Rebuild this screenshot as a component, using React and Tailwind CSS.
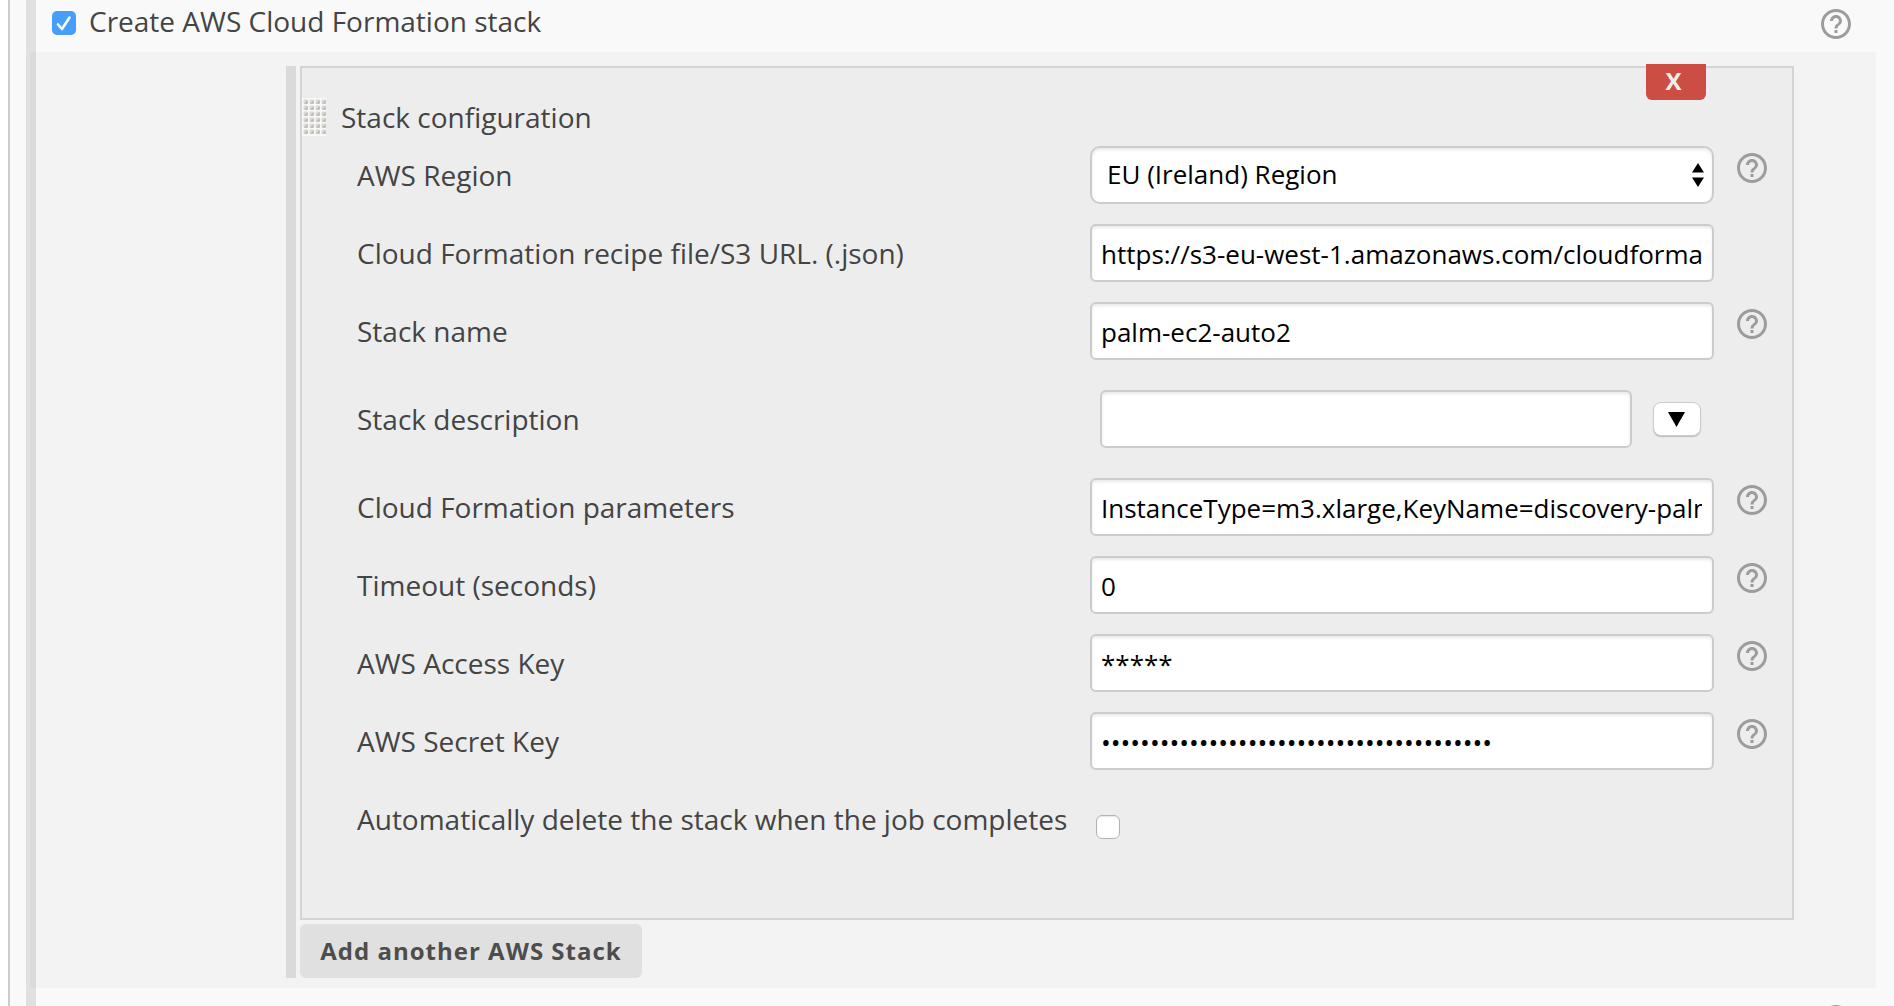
const dots = '•'.repeat(40);

function HelpIcon({ className = '' }) {
  return (
    <svg viewBox="2 2 20 20" className={`block size-[30px] shrink-0 fill-[#9c9c9c] ${className}`}>
      <path d="M11 18h2v-2h-2v2zm1-16C6.48 2 2 6.48 2 12s4.480 10 10 10 10-4.480 10-10S17.520 2 12 2zm0 18c-4.410 0-8-3.590-8-8s3.590-8 8-8 8 3.590 8 8-3.590 8-8 8zm0-14c-2.210 0-4 1.790-4 4h2c0-1.100.900-2 2-2s2 .900 2 2c0 2-3 1.750-3 5h2c0-2.250 3-2.500 3-5 0-2.210-1.790-4-4-4z" />
    </svg>
  );
}

const fieldBox =
  'h-[58px] border-2 border-[#ccc] bg-white text-black shadow-[inset_0_2px_3px_rgba(0,0,0,0.09)]';

function TextField({ value }) {
  return (
    <div className={`${fieldBox} w-[624px] rounded-md pl-[9px] pr-[10px]`}>
      <div className="overflow-hidden whitespace-nowrap text-[26px] leading-[56px]">{value}</div>
    </div>
  );
}

function Row({ label, help = true, tall = false, children }) {
  return (
    <div className={`flex items-start ${tall ? 'h-[98px] pt-[10px]' : 'h-[78px]'}`}>
      <div className="w-[733px] shrink-0 whitespace-nowrap text-[28px] leading-[58px]">{label}</div>
      <div className="w-[647px] shrink-0">{children}</div>
      {help && <HelpIcon className="mt-[7px]" />}
    </div>
  );
}

function Grip() {
  const cells = Array.from({ length: 24 });
  return (
    <svg viewBox="0 0 24 38" className="h-[38px] w-[24px] shrink-0">
      <rect width="24" height="38" fill="#f8f8f7" />
      {cells.map((_, i) => {
        const x = 1.5 + (i % 4) * 6;
        const y = 1.5 + Math.floor(i / 4) * 6;
        return (
          <g key={i}>
            <rect x={x} y={y} width="4.5" height="4.5" rx="1.2" fill="#dad9d6" />
            <path d={`M${x + 4.2} ${y + 0.6}V${y + 4.2}H${x + 0.6}Z`} fill="#bbb9b5" />
          </g>
        );
      })}
    </svg>
  );
}

export default function App() {
  return (
    <div className="flex h-[1006px] w-[1894px] overflow-hidden bg-white pl-2 font-['Open_Sans','Noto_Sans',sans-serif] text-[#444]">
      <div className="flex w-full border-l-2 border-[#ccc] bg-[#f9f9f9] pl-4">
        <div className="w-[10px] shrink-0 bg-[#e0e0e0]">
          <div className="ml-1 mt-[52px] h-[936px] bg-[#dadada]" />
        </div>
        <div className="w-[1840px] shrink-0">
          <div className="flex h-[52px] items-start">
            <div className="ml-4 mt-[11px] flex size-6 items-center justify-center rounded-[5px] bg-[#479ef8]">
              <svg viewBox="0 0 24 24" className="size-6 fill-none stroke-white stroke-[2.6]" strokeLinecap="round" strokeLinejoin="round">
                <path d="M6 13.500l4 4.500L17.500 6.500" />
              </svg>
            </div>
            <div className="ml-[13px] w-[1732px] whitespace-nowrap text-[28px] leading-[42px]">Create AWS Cloud Formation stack</div>
            <HelpIcon className="mt-[9px]" />
          </div>
          <div className="flex h-[936px] bg-[#f3f3f3] pl-[250px] pt-[14px]">
            <div className="h-[912px] w-[10px] shrink-0 bg-[#dadada]" />
            <div className="ml-1">
              <div className="relative h-[854px] w-[1494px] border-2 border-[#d4d4d4] bg-[#ededed]">
                <button className="absolute -top-1 right-[86px] h-9 w-[60px] rounded-b-md bg-[#cc4d43] pr-[5px] text-[24px] font-bold leading-[34px] text-[#eee]">
                  <span className="block h-9">X</span>
                </button>
                <div className="flex h-[78px] pt-[30px]">
                  <Grip />
                  <div className="ml-[15px] text-[28px] leading-[38px]">Stack configuration</div>
                </div>
                <div className="pl-[55px]">
                  <Row label="AWS Region">
                    <div className={`${fieldBox} flex w-[624px] items-center justify-between rounded-[10px] pl-[15px] pr-2`}>
                      <span className="h-[54px] text-[26px] leading-[52px]">EU (Ireland) Region</span>
                      <svg viewBox="0 0 12 24" className="h-6 w-3">
                        <path d="M6 0l6 9.500H0zM6 24l6-9.500H0z" />
                      </svg>
                    </div>
                  </Row>
                  <Row label="Cloud Formation recipe file/S3 URL. (.json)" help={false}>
                    <TextField value="https://s3-eu-west-1.amazonaws.com/cloudformation" />
                  </Row>
                  <Row label="Stack name">
                    <TextField value="palm-ec2-auto2" />
                  </Row>
                  <Row label="Stack description" help={false} tall>
                    <div className="flex pl-[10px]">
                      <div className={`${fieldBox} w-[532px] rounded-md`} />
                      <button className="ml-[21px] mt-3 flex h-[34px] w-12 items-center justify-center rounded-lg border border-[#ccc] bg-white pr-px pt-px shadow-[0_1px_1px_rgba(0,0,0,0.2)]">
                        <svg viewBox="0 0 17 15" className="h-[15px] w-[17px]">
                          <path d="M0 0h17L8.500 15z" />
                        </svg>
                      </button>
                    </div>
                  </Row>
                  <Row label="Cloud Formation parameters">
                    <TextField value="InstanceType=m3.xlarge,KeyName=discovery-palm" />
                  </Row>
                  <Row label="Timeout (seconds)">
                    <TextField value="0" />
                  </Row>
                  <Row label="AWS Access Key">
                    <TextField value="*****" />
                  </Row>
                  <Row label="AWS Secret Key">
                    <TextField value={dots} />
                  </Row>
                  <Row label="Automatically delete the stack when the job completes" help={false}>
                    <div className="ml-[6px] mt-[25px] size-6 rounded-[6px] border border-[#b4b4b4] bg-white shadow-[inset_0_1px_1px_rgba(0,0,0,0.1)]" />
                  </Row>
                </div>
              </div>
              <button className="mt-1 block h-[54px] w-[342px] rounded-md bg-[#e0e0e0] text-[24px] font-bold tracking-[1px] text-[#4d4d4d]">
                Add another AWS Stack
              </button>
            </div>
          </div>
          <div className="flex h-[18px] justify-end overflow-hidden pr-[25px] pt-[17px]">
            <HelpIcon />
          </div>
        </div>
      </div>
    </div>
  );
}
